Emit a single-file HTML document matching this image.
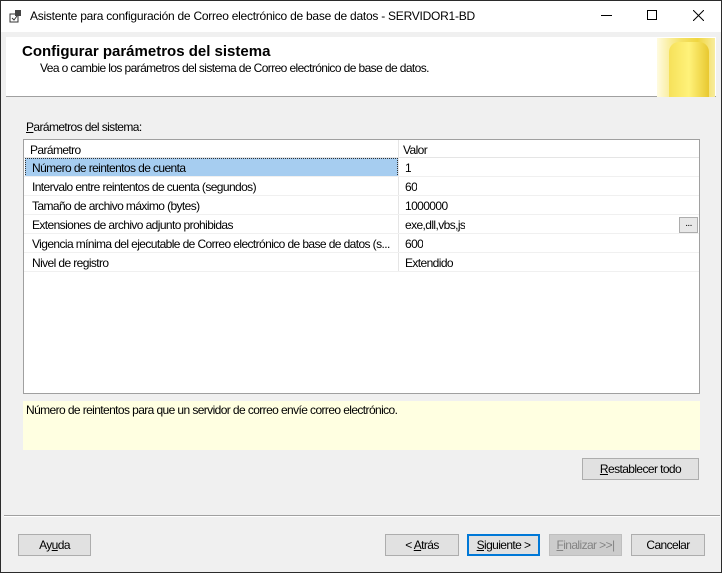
<!DOCTYPE html>
<html><head><meta charset="utf-8"><style>
*{margin:0;padding:0;box-sizing:border-box}
body{width:722px;height:573px;background:#f0f0f0;font-family:"Liberation Sans",sans-serif;font-size:12px;color:#000;position:relative;overflow:hidden;letter-spacing:-0.6px}
.abs{position:absolute;white-space:nowrap}
.frame{position:absolute;left:0;top:0;width:722px;height:573px;border:1px solid #2b2b2b;pointer-events:none}
.btn{position:absolute;height:22px;background:#e1e1e1;border:1px solid #adadad;text-align:center;line-height:20px}
.row{position:absolute;left:24px;width:675px;height:19px;border-bottom:1px solid #f0f0f0}
.row span{position:absolute;top:3px;white-space:nowrap;overflow:hidden}
.row .a{left:8px;width:364px}.row .b{left:381px}
</style></head><body>
<div class="abs" style="left:0;top:0;width:722px;height:32px;background:#fff"></div>
<svg class="abs" style="left:9px;top:9px" width="14" height="14" viewBox="0 0 14 14"><rect x="1" y="5" width="8" height="8" fill="#fff" stroke="#333"/><path d="M3 9l2 2 3-4" stroke="#333" fill="none"/><rect x="6" y="1" width="6" height="6" fill="#444"/></svg>
<div class="abs" style="left:30px;top:9px;letter-spacing:-0.25px">Asistente para configuración de Correo electrónico de base de datos - SERVIDOR1-BD</div>
<div class="abs" style="left:601px;top:15px;width:11px;height:1px;background:#000"></div>
<div class="abs" style="left:647px;top:10px;width:10px;height:10px;border:1px solid #000"></div>
<svg class="abs" style="left:693px;top:10px" width="11" height="11"><path d="M0 0L11 11M11 0L0 11" stroke="#000"/></svg>
<div class="abs" style="left:6px;top:37px;width:710px;height:60px;background:#fff;border-bottom:1px solid #a0a0a0"></div>
<div class="abs" style="left:22px;top:43px;font-size:15px;font-weight:bold;letter-spacing:0">Configurar parámetros del sistema</div>
<div class="abs" style="left:40px;top:61px">Vea o cambie los parámetros del sistema de Correo electrónico de base de datos.</div>
<div class="abs" style="left:657px;top:38px;width:58px;height:59px;background:linear-gradient(90deg,#fffbe0,#f5e36a 40%,#f0d640 70%,#f8ec9c)"></div>
<div class="abs" style="left:669px;top:42px;width:40px;height:55px;border-radius:10px 10px 0 0;background:linear-gradient(90deg,#f6e15a,#fff27a 50%,#e8c830)"></div>
<div class="abs" style="left:26px;top:120px"><u>P</u>arámetros del sistema:</div>
<div class="abs" style="left:23px;top:139px;width:677px;height:255px;background:#fff;border:1px solid #a0a0a0"></div>
<div class="abs" style="left:24px;top:140px;width:675px;height:18px;border-bottom:1px solid #e5e5e5"><span class="abs" style="left:6px;top:3px">Parámetro</span><span class="abs" style="left:379px;top:3px">Valor</span></div>
<div class="abs" style="left:398px;top:140px;width:1px;height:132px;background:#e5e5e5"></div>
<div class="abs" style="left:25px;top:158px;width:373px;height:19px;background:#a6cdf0;border:1px dotted #333"></div>
<div class="row" style="top:158px"><span class="a">Número de reintentos de cuenta</span><span class="b">1</span></div>
<div class="row" style="top:177px"><span class="a">Intervalo entre reintentos de cuenta (segundos)</span><span class="b">60</span></div>
<div class="row" style="top:196px"><span class="a">Tamaño de archivo máximo (bytes)</span><span class="b">1000000</span></div>
<div class="row" style="top:215px"><span class="a">Extensiones de archivo adjunto prohibidas</span><span class="b">exe,dll,vbs,js</span></div>
<div class="abs" style="left:679px;top:217px;width:19px;height:16px;background:#e8e8e8;border:1px solid #adadad;font-size:10px;text-align:center;line-height:12px">...</div>
<div class="row" style="top:234px"><span class="a">Vigencia mínima del ejecutable de Correo electrónico de base de datos (s...</span><span class="b">600</span></div>
<div class="row" style="top:253px"><span class="a">Nivel de registro</span><span class="b">Extendido</span></div>
<div class="abs" style="left:23px;top:401px;width:677px;height:49px;background:#ffffe1"></div>
<div class="abs" style="left:26px;top:403px">Número de reintentos para que un servidor de correo envíe correo electrónico.</div>
<div class="btn" style="left:582px;top:458px;width:117px"><u>R</u>establecer todo</div>
<div class="abs" style="left:4px;top:515px;width:716px;height:2px;background:#a0a0a0;border-bottom:1px solid #fff"></div>
<div class="btn" style="left:18px;top:534px;width:73px">Ay<u>u</u>da</div>
<div class="btn" style="left:385px;top:534px;width:74px">&lt; <u>A</u>trás</div>
<div class="btn" style="left:467px;top:534px;width:73px;border:2px solid #0078d7;line-height:18px"><u>S</u>iguiente &gt;</div>
<div class="btn" style="left:549px;top:534px;width:73px;background:#ccc;border-color:#bfbfbf;color:#838383"><u>F</u>inalizar &gt;&gt;|</div>
<div class="btn" style="left:631px;top:534px;width:74px">Cancelar</div>
<div class="frame"></div>
</body></html>
